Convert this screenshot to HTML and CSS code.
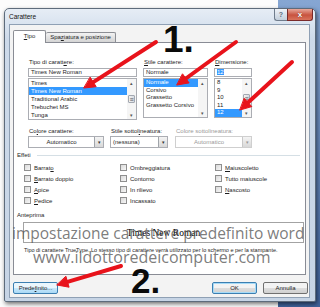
FILE: index.html
```html
<!DOCTYPE html>
<html lang="it">
<head>
    <meta charset="UTF-8">
    <meta name="viewport" content="width=device-width, initial-scale=1.0">
    <title>Carattere</title>
    <link rel="stylesheet" href="styles.css">
</head>
<body>
<div class="desk">
    <div class="dialog">
        <div class="titlebar">
            <span class="title">Carattere</span>
            <div class="caption-buttons">
                <span class="help">?</span>
                <span class="close">x</span>
            </div>
        </div>

        <div class="body">
            <div class="tabs">
                <span class="tab active"><u>T</u>ipo</span>
                <span class="tab">Spa<u>z</u>iatura e posizione</span>
            </div>

            <div class="panel">
                <!-- font / style / size pickers -->
                <div class="pickers">
                    <div class="field font-field">
                        <label>Tipo di caratt<u>e</u>re:</label>
                        <div class="input">Times New Roman</div>
                        <div class="list">
                            <div class="items">
                                <div class="item">Times</div>
                                <div class="item selected">Times New Roman</div>
                                <div class="item">Traditional Arabic</div>
                                <div class="item">Trebuchet MS</div>
                                <div class="item">Tunga</div>
                            </div>
                            <div class="scroll">
                                <span class="arrow">&#9652;</span>
                                <span class="thumb low">&#8801;</span>
                                <span class="arrow">&#9662;</span>
                            </div>
                        </div>
                    </div>
                    <div class="field style-field">
                        <label><u>S</u>tile carattere:</label>
                        <div class="input">Normale</div>
                        <div class="list short">
                            <div class="items">
                                <div class="item selected">Normale</div>
                                <div class="item">Corsivo</div>
                                <div class="item">Grassetto</div>
                                <div class="item">Grassetto Corsivo</div>
                            </div>
                            <div class="scroll">
                                <span class="arrow">&#9652;</span>
                                <span class="arrow">&#9662;</span>
                            </div>
                        </div>
                    </div>
                    <div class="field size-field">
                        <label><u>D</u>imensione:</label>
                        <div class="input"><span class="marked">12</span></div>
                        <div class="list short">
                            <div class="items">
                                <div class="item">8</div>
                                <div class="item">9</div>
                                <div class="item">10</div>
                                <div class="item">11</div>
                                <div class="item selected">12</div>
                            </div>
                            <div class="scroll">
                                <span class="arrow">&#9652;</span>
                                <span class="thumb">&#8801;</span>
                                <span class="arrow">&#9662;</span>
                            </div>
                        </div>
                    </div>
                </div>

                <!-- colour and underline -->
                <div class="dropdowns">
                    <div class="field color-field">
                        <label>Co<u>l</u>ore carattere:</label>
                        <div class="select"><span class="value">Automatico</span><span class="drop">&#9662;</span></div>
                    </div>
                    <div class="field underline-field">
                        <label>Stile sottol<u>i</u>neatura:</label>
                        <div class="select left"><span class="value">(nessuna)</span><span class="drop">&#9662;</span></div>
                    </div>
                    <div class="field ucolor-field disabled">
                        <label>Colore sottolineatura:</label>
                        <div class="select"><span class="value">Automatico</span><span class="drop">&#9662;</span></div>
                    </div>
                </div>

                <div class="group-title">Effeti<span class="rule"></span></div>
                <div class="checks">
                    <div class="check"><span class="box"></span><span>Barrat<u>o</u></span></div>
                    <div class="check"><span class="box"></span><span>Ombreggiatura</span></div>
                    <div class="check"><span class="box"></span><span><u>M</u>aiuscoletto</span></div>
                    <div class="check"><span class="box"></span><span><u>B</u>arrato doppio</span></div>
                    <div class="check"><span class="box"></span><span>Contorno</span></div>
                    <div class="check"><span class="box"></span><span>Tutto maiuscole</span></div>
                    <div class="check"><span class="box"></span><span><u>A</u>pice</span></div>
                    <div class="check"><span class="box"></span><span>In rilievo</span></div>
                    <div class="check"><span class="box"></span><span><u>N</u>ascosto</span></div>
                    <div class="check"><span class="box"></span><span><u>P</u>edice</span></div>
                    <div class="check"><span class="box"></span><span>Incassato</span></div>
                </div>

                <div class="group-title">Anteprima</div>
                <div class="preview">Times New Roman</div>
                <div class="desc">Tipo di carattere TrueType. Lo stesso tipo di carattere verrà utilizzato per lo schermo e per la stampante.</div>
            </div>

            <div class="footer">
                <button class="btn hot">Prede<u>f</u>inito...</button>
                <button class="btn default push">OK</button>
                <button class="btn">Annulla</button>
            </div>
        </div>
    </div>

    <!-- annotations on top of the screenshot -->
    <div class="watermark wm-title">impostazione carattere predefinito word</div>
    <div class="watermark wm-site">www.ildottoredeicomputer.com</div>
    <div class="step step-one">1.</div>
    <div class="step step-two">2.</div>

    <svg class="arrows" width="320" height="307" viewBox="0 0 320 307">
        <g stroke="#e8131b" stroke-width="4" stroke-linecap="round" fill="#e8131b">
            <line x1="156" y1="42" x2="93.3" y2="82.1"/>
            <polygon points="84,88 96.2,86.7 90.3,77.4" stroke-width="1"/>
            <line x1="236" y1="42" x2="185.9" y2="78.5"/>
            <polygon points="177,85 189.1,82.9 182.7,74.1" stroke-width="1"/>
            <line x1="292" y1="62" x2="248.1" y2="102.5"/>
            <polygon points="240,110 251.8,106.6 244.4,98.5" stroke-width="1"/>
            <line x1="121" y1="266" x2="67.5" y2="281.9"/>
            <polygon points="57,285 69.1,287.2 66,276.6" stroke-width="1"/>
        </g>
    </svg>
</div>
</body>
</html>
```

FILE: styles.css
```css
body {
    margin: 0;
    font-family: "Liberation Sans", Arial, sans-serif;
    font-size: 6px;
    color: #1e1e1e;
}

u {
    text-decoration-thickness: 1px;
}

.desk {
    position: relative;
    width: 320px;
    height: 307px;
    overflow: hidden;
    box-sizing: border-box;
    padding-top: 8px;
    background: linear-gradient(#86a6d3, #3e6199) right top / 42px 100% no-repeat, #fcfcfc;
}

.dialog {
    margin-left: 4px;
    width: 312px;
    height: 294px;
    box-sizing: border-box;
    border: 1px solid #5d6b7b;
    border-radius: 5px 5px 2px 2px;
    padding: 0 5px 3px 4px;
    display: flex;
    flex-direction: column;
    background: linear-gradient(#e6edf5, #cddaea 30px, #c6d4e5);
    box-shadow: 1px 2px 4px rgba(0, 0, 0, 0.55);
}

.titlebar {
    height: 15px;
    display: flex;
    align-items: flex-start;
}

.title {
    line-height: 15px;
    font-size: 6.5px;
    color: #111;
}

.caption-buttons {
    margin-left: auto;
    margin-right: -3px;
    display: flex;
}

.help,
.close {
    height: 12px;
    box-sizing: border-box;
    border: 1px solid #6f7c8c;
    border-top: none;
    display: flex;
    align-items: center;
    justify-content: center;
    font-weight: bold;
    color: #fff;
}

.help {
    width: 13px;
    border-right: none;
    border-radius: 0 0 0 3px;
    background: linear-gradient(#eef2f7, #c3cfdc);
    color: #5d6c80;
    font-size: 7px;
}

.close {
    width: 26px;
    border-color: #7a2a2a;
    border-radius: 0 0 3px 0;
    background: linear-gradient(#e9a99c, #c8533f 55%, #d9735c);
    font-size: 8px;
    text-shadow: 0 0 1px #5a1a10;
}

.body {
    flex: 1;
    display: flex;
    flex-direction: column;
    padding: 0 3px;
    border: 1px solid #8fa0b4;
    background: #f3f3f3;
}

.tabs {
    margin-top: 5px;
    height: 12px;
    display: flex;
    align-items: flex-end;
}

.tab {
    height: 10px;
    width: 70px;
    box-sizing: border-box;
    border: 1px solid #8c8e94;
    border-bottom: none;
    border-left: none;
    line-height: 9px;
    text-align: center;
    background: linear-gradient(#f3f3f3, #e2e2e2 50%, #d5d5d5);
    border-radius: 2px 2px 0 0;
}

.tab.active {
    width: 33px;
    height: 13px;
    line-height: 11px;
    margin-bottom: -1px;
    border-left: 1px solid #8c8e94;
    background: #fff;
    position: relative;
    z-index: 1;
}

.panel {
    height: 233px;
    box-sizing: border-box;
    border: 1px solid #898c95;
    background: #fff;
}

.field label {
    display: block;
    line-height: 8px;
    padding-left: 1px;
}

.pickers {
    display: flex;
    gap: 6px;
    margin-top: 15px;
    padding-left: 14px;
}

.font-field { width: 109px; }
.style-field { width: 65px; }
.size-field { width: 38px; }

.input {
    margin-top: 2px;
    height: 9px;
    box-sizing: border-box;
    border: 1px solid #abadb3;
    line-height: 7px;
    padding-left: 2px;
}

.marked {
    background: #3399ff;
    color: #fff;
}

.list {
    margin-top: 1px;
    display: flex;
    border: 1px solid #abadb3;
}

.items {
    flex: 1;
}

.item {
    line-height: 8px;
    padding-left: 2px;
}

.list.short .item {
    line-height: 7.5px;
}

.list.short {
    height: 39.5px;
    box-sizing: border-box;
}

.item.selected {
    background: #3399ff;
    color: #fff;
}

.scroll {
    width: 9px;
    display: flex;
    flex-direction: column;
    justify-content: space-between;
    align-items: center;
    background: #f5f5f5;
    color: #555;
    font-size: 5px;
}

.scroll .arrow {
    line-height: 8px;
}

.scroll .thumb {
    width: 7px;
    height: 8px;
    line-height: 8px;
    text-align: center;
    font-size: 7px;
    border: 1px solid #a3a8b1;
    border-radius: 1px;
    background: linear-gradient(to right, #f2f2f2, #d8dce2);
    box-sizing: border-box;
}

.dropdowns {
    display: flex;
    margin-top: 7px;
    padding-left: 14px;
}

.color-field { width: 76px; }
.underline-field { width: 58px; margin-left: 6px; }
.ucolor-field { width: 77px; margin-left: 7px; }

.select {
    margin-top: 1px;
    height: 12px;
    box-sizing: border-box;
    border: 1px solid #abadb3;
    display: flex;
}

.select .value {
    flex: 1;
    line-height: 10px;
    text-align: center;
}

.select.left .value {
    text-align: left;
    padding-left: 2px;
}

.select .drop {
    width: 8px;
    line-height: 10px;
    text-align: center;
    font-size: 5px;
    border-left: 1px solid #a0a4aa;
    background: linear-gradient(#f4f4f4, #d8d8d8);
    color: #333;
}

.disabled {
    color: #9a9a9a;
}

.disabled .select {
    border-color: #cfcfcf;
}

.disabled .drop {
    color: #999;
    border-color: #c8c8c8;
}

.group-title {
    display: flex;
    align-items: center;
    margin-top: 3px;
    padding-left: 3px;
    line-height: 8px;
}

.rule {
    flex: 1;
    height: 1px;
    margin: 0 5px 0 6px;
    background: #d5dfe5;
}

.checks {
    display: grid;
    grid-template-columns: 96px 95px 1fr;
    grid-auto-rows: 11px;
    margin-top: 3px;
    padding-left: 10px;
}

.checks .check:nth-child(10) {
    grid-column: 1;
}

.check {
    display: flex;
    align-items: center;
    gap: 3px;
}

.box {
    width: 7px;
    height: 7px;
    box-sizing: border-box;
    border: 1px solid #8f8f8f;
    background: linear-gradient(135deg, #d9d9d9, #f7f7f7);
}

.checks + .group-title {
    margin-top: 5px;
}

.preview {
    margin: 3px 0 0 9px;
    width: 281px;
    height: 21px;
    box-sizing: border-box;
    border: 1px solid #a3a3a3;
    display: flex;
    align-items: center;
    justify-content: center;
    font-family: "Liberation Serif", "Times New Roman", serif;
    font-size: 9.5px;
    color: #000;
}

.desc {
    margin-top: 3px;
    padding-left: 10px;
    line-height: 8px;
    font-size: 5.5px;
    white-space: nowrap;
}

.footer {
    display: flex;
    gap: 6px;
    margin-top: 7px;
    margin-right: -2px;
}

.btn {
    width: 45px;
    height: 12px;
    padding: 0;
    box-sizing: border-box;
    border: 1px solid #707070;
    border-radius: 2px;
    font-family: inherit;
    font-size: 6px;
    color: #1e1e1e;
    background: linear-gradient(#f3f3f3 45%, #dedede 50%, #d0d0d0);
}

.btn.hot {
    border-color: #3c7fb1;
    background: linear-gradient(#eaf6fd 45%, #c9e8fb 50%, #a9d9f6);
}

.btn.default {
    border-color: #3c7fb1;
    box-shadow: inset 0 0 0 1px #a6dbf8;
}

.btn.push {
    margin-left: auto;
}

.watermark {
    position: absolute;
    font-family: "Open Sans", sans-serif;
    color: rgba(90, 90, 90, 0.8);
    white-space: nowrap;
}

.wm-title {
    left: 12px;
    top: 226px;
    font-size: 15.5px;
    line-height: 15px;
}

.wm-site {
    left: 33px;
    top: 249px;
    font-size: 16px;
    line-height: 16px;
}

.step {
    position: absolute;
    font-family: "Liberation Sans", Arial, sans-serif;
    font-weight: bold;
    color: #0a0a0a;
}

.step-one {
    left: 163px;
    top: 21px;
    font-size: 37px;
    line-height: 37px;
}

.step-two {
    left: 131px;
    top: 263px;
    font-size: 35px;
    line-height: 35px;
}

.arrows {
    position: absolute;
    left: 0;
    top: 0;
}
```
